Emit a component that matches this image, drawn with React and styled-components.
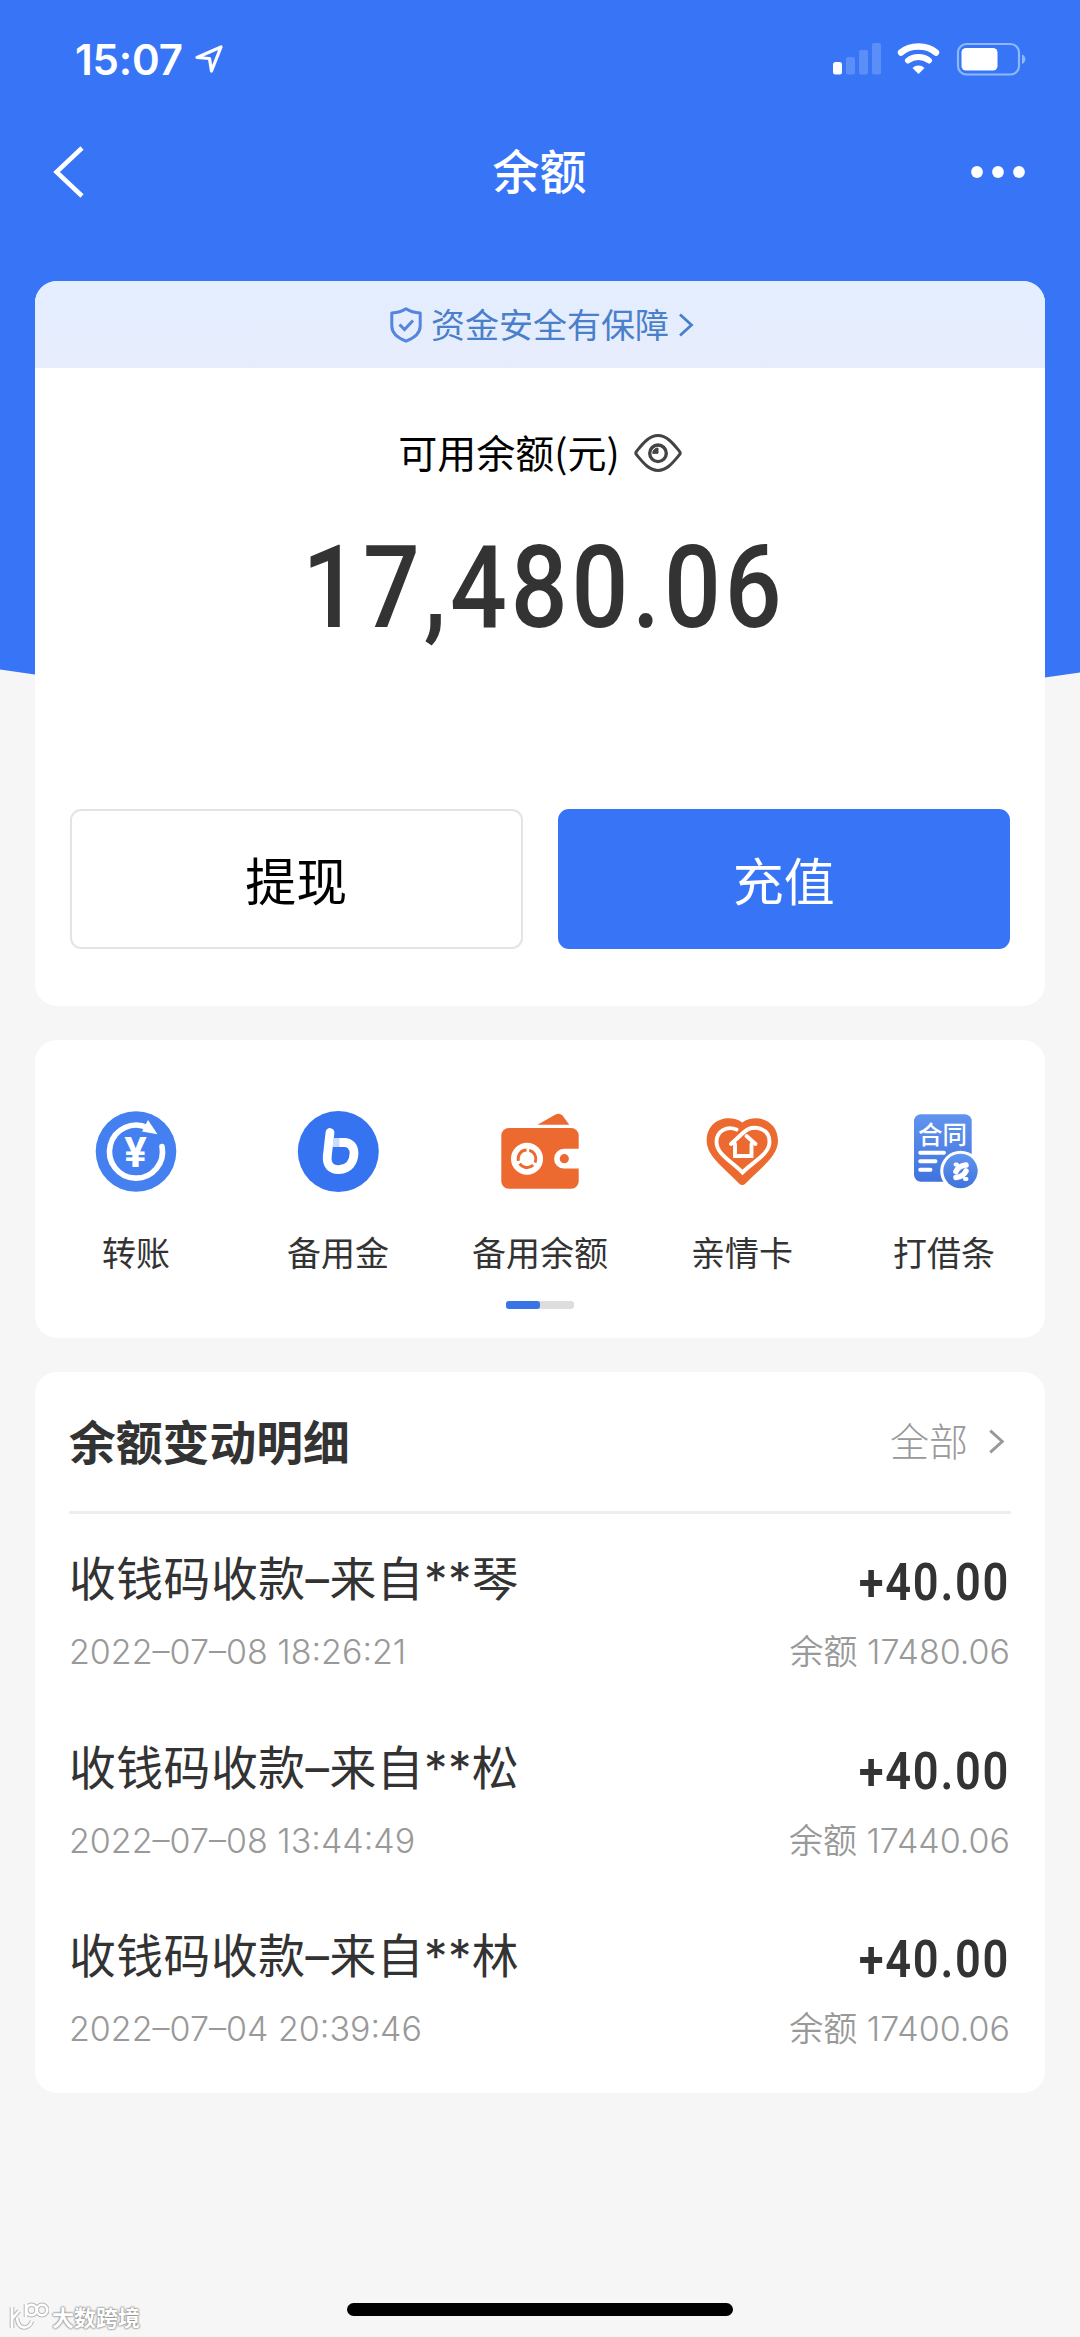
import styled, { createGlobalStyle, css } from "styled-components";

const colors = {
  blue: "#3875f6",
  linkBlue: "#4a7fc9",
  orange: "#ec6a30",
  text: "#333333",
  gray: "#999999",
  line: "#eeeeee",
  page: "#f6f6f6",
};

const quickLinks = [
  { label: "转账", Icon: TransferIcon },
  { label: "备用金", Icon: ReserveIcon },
  { label: "备用余额", Icon: WalletIcon },
  { label: "亲情卡", Icon: FamilyIcon },
  { label: "打借条", Icon: ContractIcon },
];

const records = [
  {
    title: "收钱码收款–来自**琴",
    time: "2022–07–08 18:26:21",
    amount: "+40.00",
    balance: "17480.06",
  },
  {
    title: "收钱码收款–来自**松",
    time: "2022–07–08 13:44:49",
    amount: "+40.00",
    balance: "17440.06",
  },
  {
    title: "收钱码收款–来自**林",
    time: "2022–07–04 20:39:46",
    amount: "+40.00",
    balance: "17400.06",
  },
];

const App = () => {
  return (
    <>
      <GlobalStyle />
      <Screen>
        <HeaderBackground />
        <StatusBar>
          <Time>15:07</Time>
          <LocationIcon />
          <StatusIcons />
        </StatusBar>
        <NavBar>
          <BackIcon />
          <NavTitle>余额</NavTitle>
          <MoreIcon />
        </NavBar>

        <Main>
          <Card>
            <SafetyBanner>
              <ShieldIcon />
              <SafetyText>资金安全有保障</SafetyText>
              <Chevron width={16} height={24} stroke={colors.linkBlue} />
            </SafetyBanner>
            <BalanceLabel>
              <BalanceLabelText>可用余额(元)</BalanceLabelText>
              <EyeIcon />
            </BalanceLabel>
            <Balance>17,480.06</Balance>
            <Actions>
              <ActionButton>提现</ActionButton>
              <ActionButton $primary>充值</ActionButton>
            </Actions>
          </Card>

          <Card>
            <QuickLinks>
              {quickLinks.map(({ label, Icon }) => (
                <QuickLink key={label}>
                  <Icon />
                  <span>{label}</span>
                </QuickLink>
              ))}
            </QuickLinks>
            <Pager>
              <PagerThumb />
            </Pager>
          </Card>

          <Card>
            <RecordHeader>
              <RecordHeading>余额变动明细</RecordHeading>
              <AllLink>
                <AllText>全部</AllText>
                <Chevron width={17} height={25} stroke={colors.gray} />
              </AllLink>
            </RecordHeader>
            <RecordList>
              {records.map((record) => (
                <Record key={record.time}>
                  <RecordLine>
                    <RecordTitle>{record.title}</RecordTitle>
                    <RecordAmount>{record.amount}</RecordAmount>
                  </RecordLine>
                  <RecordMeta>
                    <span>{record.time}</span>
                    <span>余额 {record.balance}</span>
                  </RecordMeta>
                </Record>
              ))}
            </RecordList>
          </Card>
        </Main>

        <Footer>
          <Watermark>
            <WatermarkLogo />
            <span>大数跨境</span>
          </Watermark>
          <HomeIndicator />
        </Footer>
      </Screen>
    </>
  );
};

export default App;

function LocationIcon() {
  return (
    <svg width="30" height="30" viewBox="0 0 30 30" fill="none">
      <path
        d="M3 13.5 27 3 17.5 27 15.5 14.5Z"
        stroke="#fff"
        strokeWidth="3.2"
        strokeLinejoin="round"
      />
    </svg>
  );
}

function StatusIcons() {
  return (
    <StatusSvg width="194" height="34" viewBox="0 0 194 34" fill="none">
      <rect x="1" y="20" width="9" height="12.5" rx="2.5" fill="#fff" />
      <g fill="#fff" opacity="0.18">
        <rect x="14" y="15" width="9" height="17.5" rx="2" />
        <rect x="27" y="8" width="9" height="24.5" rx="2" />
        <rect x="40" y="1" width="9" height="31.5" rx="2" />
      </g>
      <path
        d="M69 10.5C78 2.5 95 2.5 104 10.5"
        stroke="#fff"
        strokeWidth="6.4"
        strokeLinecap="round"
      />
      <path
        d="M76 18.5C82 13.8 91 13.8 97 18.5"
        stroke="#fff"
        strokeWidth="6"
        strokeLinecap="round"
      />
      <path
        d="M80.5 26C84 22.7 89 22.7 92.5 26L86.5 32Z"
        fill="#fff"
      />
      <rect
        x="126"
        y="2"
        width="61"
        height="30.5"
        rx="8.5"
        stroke="#8db9fb"
        strokeWidth="2.2"
      />
      <rect x="129.5" y="6" width="36" height="22.5" rx="4.5" fill="#fff" />
      <path d="M190 12.5C194.5 14 194.5 20.5 190 22Z" fill="#8db9fb" />
    </StatusSvg>
  );
}

function BackIcon() {
  return (
    <svg width="32" height="52" viewBox="0 0 32 52" fill="none">
      <path d="M29 2 3.5 26 29 50" stroke="#fff" strokeWidth="4.5" />
    </svg>
  );
}

function MoreIcon() {
  return (
    <svg width="56" height="14" viewBox="0 0 56 14" fill="#fff">
      <circle cx="7" cy="7" r="5.9" />
      <circle cx="28" cy="7" r="5.9" />
      <circle cx="49" cy="7" r="5.9" />
    </svg>
  );
}

function ShieldIcon() {
  return (
    <svg width="32" height="36" viewBox="0 0 32 36" fill="none">
      <path
        d="M16 1.8C12 4.6 7 5.8 1.8 6V19C1.8 27 9 31.5 16 34.2C23 31.5 30.2 27 30.2 19V6C25 5.8 20 4.6 16 1.8Z"
        stroke="#5585dc"
        strokeWidth="3"
        strokeLinejoin="round"
      />
      <path
        d="M9.5 17.5 14.5 22.5 23 13.5"
        stroke="#5585dc"
        strokeWidth="3"
      />
    </svg>
  );
}

function Chevron({ width, height, stroke }) {
  return (
    <svg width={width} height={height} viewBox="0 0 16 24" fill="none">
      <path d="M2 1.5 13.5 12 2 22.5" stroke={stroke} strokeWidth="2.8" />
    </svg>
  );
}

function EyeIcon() {
  return (
    <svg width="48" height="38" viewBox="0 0 48 38" fill="none">
      <path
        d="M2.6 17.2C9 9.5 15 1.6 24 1.6C33 1.6 39 9.5 45.4 17.2Q47 19 45.4 20.8C39 28.5 33 36.4 24 36.4C15 36.4 9 28.5 2.6 20.8Q1 19 2.6 17.2Z"
        stroke="#444"
        strokeWidth="3"
      />
      <circle cx="24" cy="19.3" r="8.3" stroke="#444" strokeWidth="3.4" />
      <path d="M24 14V19.3H18.7A5.3 5.3 0 0 1 24 14Z" fill="#444" stroke="#444" />
    </svg>
  );
}

function TransferIcon() {
  return (
    <IconSvg viewBox="0 0 84 84">
      <circle cx="42" cy="41.5" r="40.3" fill="#4480ef" />
      <path
        d="M68 36.5A26.5 26.5 0 1 1 54 18"
        fill="none"
        stroke="#fff"
        strokeWidth="5.6"
        strokeLinecap="round"
      />
      <path d="M54 10 63.5 24.3 48 21.5Z" fill="#fff" />
      <YenText x="41.5" y="56.5">
        ¥
      </YenText>
    </IconSvg>
  );
}

function ReserveIcon() {
  return (
    <IconSvg viewBox="0 0 84 84">
      <circle cx="42.3" cy="41.5" r="40.5" fill="#3573f1" />
      <path
        d="M34 22.5 31.3 46C30.5 55 35 60 43 59.6C53 59 57.8 52 58 43.5C58.1 36.5 54 32.5 48 32.5"
        fill="none"
        stroke="#fff"
        strokeWidth="8.8"
        strokeLinecap="round"
        strokeLinejoin="round"
      />
      <path d="M37 32.5H49" stroke="#cbdbfb" strokeWidth="8.8" />
      <path d="M43.5 32.5H49" stroke="#fff" strokeWidth="8.8" />
    </IconSvg>
  );
}

function WalletIcon() {
  return (
    <IconSvg viewBox="0 0 84 84">
      <g fill={colors.orange}>
        <path d="M39.5 14.7 57.5 4.6Q61.5 2.7 64.5 5.5L71.3 14.7Z" />
        <rect x="3.3" y="18" width="77.4" height="60.7" rx="7.5" />
      </g>
      <path d="M81.5 38.8H66A9.9 9.9 0 0 0 66 58.6H81.5Z" fill="#fff" />
      <circle cx="66.3" cy="48.7" r="4.6" fill={colors.orange} />
      <circle cx="29" cy="48.7" r="16" fill="#fff" />
      <circle
        cx="29"
        cy="48.7"
        r="8.8"
        fill="none"
        stroke={colors.orange}
        strokeWidth="3"
        strokeDasharray="15.4 3"
        transform="rotate(-75 29 48.7)"
      />
    </IconSvg>
  );
}

function FamilyIcon() {
  return (
    <IconSvg viewBox="0 0 84 84">
      <path
        d="M42.3 12.5C55 3.5 78 9 78 31C78 47 58 60 45.5 73.5Q42.3 76.5 39 73.5C27 60 6.7 47 6.7 31C6.7 9 29.5 3.5 42.3 12.5Z"
        fill={colors.orange}
      />
      <g fill="none" stroke="#fff" strokeWidth="3.9" strokeLinecap="round">
        <path d="M36.5 19.5C27 15.5 16.5 21 16.5 32C16.5 44 31 51 42.5 62.5C54 51 69.5 44 69.5 32C69.5 18 53 13.5 43.5 22.5L31 34" />
        <path d="M46.5 26 55.5 34M35 34V46H51.5V34" />
      </g>
    </IconSvg>
  );
}

function ContractIcon() {
  return (
    <IconSvg viewBox="0 0 84 84">
      <defs>
        <linearGradient id="contract" x1="0" y1="0" x2="0" y2="1">
          <stop offset="0" stopColor="#6194ee" />
          <stop offset="1" stopColor="#4073dd" />
        </linearGradient>
      </defs>
      <rect
        x="12"
        y="4.3"
        width="57.7"
        height="67.5"
        rx="7"
        fill="url(#contract)"
      />
      <ContractText x="40.5" y="33.5">
        合同
      </ContractText>
      <path
        d="M18.2 42.7H42M18.2 51.3H33.5M18.2 59.8H28.5"
        stroke="#fff"
        strokeWidth="3.9"
        strokeLinecap="round"
      />
      <circle cx="58.5" cy="61" r="20.3" fill="#fff" />
      <circle cx="58.5" cy="61" r="17.2" fill="url(#contract)" />
      <g stroke="#fff" strokeLinecap="round" fill="none">
        <path
          d="M54 61.5C55.5 57.5 60 55.5 64 55M54 67.5C59 67 62.5 64.5 64 61"
          strokeWidth="5.6"
        />
        <path d="M53.5 54.5H55M63 69H64.5" strokeWidth="4" />
      </g>
    </IconSvg>
  );
}

function WatermarkLogo() {
  return (
    <svg width="40" height="28" viewBox="0 0 40 28" fill="none">
      {["#b9b9b9", "#ffffff"].map((stroke, i) => (
        <g key={stroke} stroke={stroke} strokeWidth={i ? 2.6 : 4.6}>
          <path d="M3 5V26M3 17 10 9M8 16C9 28 20 28 23 19" />
          <path d="M17 2V15" />
          <circle cx="22.5" cy="8" r="5.2" />
          <circle cx="33" cy="8" r="5.2" />
        </g>
      ))}
    </svg>
  );
}

const GlobalStyle = createGlobalStyle`
  * {
    box-sizing: border-box;
  }

  body {
    margin: 0;
    background-color: ${colors.page};
    font-family: Inter, "Noto Sans CJK SC", sans-serif;
    color: ${colors.text};
  }

  svg {
    display: block;
    flex-shrink: 0;
  }
`;

const Screen = styled.div`
  position: relative;
  display: flex;
  flex-direction: column;
  width: 1080px;
  height: 2337px;
  overflow: hidden;
  background-color: ${colors.page};
`;

const HeaderBackground = styled.div`
  position: absolute;
  top: 0;
  left: 0;
  width: 1080px;
  height: 760px;
  background-color: ${colors.blue};
  clip-path: path("M0 0H1080V672.5Q540 752 0 669.5Z");
`;

const StatusBar = styled.div`
  position: relative;
  display: flex;
  align-items: center;
  height: 118px;
  padding: 0 54px 0 75px;
`;

const Time = styled.span`
  width: 119px;
  font-size: 42px;
  font-weight: 600;
  letter-spacing: -0.2px;
  color: #fff;
`;

const StatusSvg = styled.svg`
  margin-left: auto;
`;

const NavBar = styled.div`
  position: relative;
  display: flex;
  align-items: center;
  justify-content: space-between;
  height: 109px;
  padding: 0 54px 1px 53px;
`;

const NavTitle = styled.h1`
  margin: 0 0 7px 24px;
  font-size: 47px;
  font-weight: 500;
  color: #fff;
`;

const Main = styled.main`
  position: relative;
  display: flex;
  flex-direction: column;
  gap: 34px;
  padding: 54px 35px 0;
`;

const Card = styled.section`
  overflow: hidden;
  border-radius: 22px;
  background-color: #fff;
`;

const SafetyBanner = styled.div`
  display: flex;
  align-items: center;
  justify-content: center;
  gap: 9px;
  height: 87px;
  padding-left: 4px;
  background: linear-gradient(#e3eeff, #e7ecfc);
  font-size: 34px;
  color: ${colors.linkBlue};
`;

const SafetyText = styled.span`
  margin-bottom: 3px;
`;

const BalanceLabel = styled.div`
  display: flex;
  align-items: center;
  justify-content: center;
  gap: 14px;
  height: 60px;
  margin-top: 55px;
  font-family: "Noto Sans CJK SC", sans-serif;
  font-size: 39px;
  color: #000;
`;

const BalanceLabelText = styled.span`
  margin-bottom: 5px;
`;

const dinText = css`
  font-family: Roboto, "Liberation Sans", sans-serif;
  white-space: nowrap;
`;

const Balance = styled.div`
  ${dinText};
  margin-top: 45px;
  padding-left: 9px;
  font-size: 115px;
  font-weight: 500;
  line-height: 120px;
  letter-spacing: 4.5px;
  text-align: center;
  transform: scaleX(0.87);
`;

const Actions = styled.div`
  display: flex;
  gap: 35px;
  margin-top: 161px;
  padding: 0 35px 57px;
`;

const ActionButton = styled.button`
  flex: 1;
  height: 140px;
  padding: 0;
  border: 2px solid #e4e4e4;
  border-radius: 11px;
  background-color: #fff;
  font-family: "Noto Sans CJK SC", sans-serif;
  font-size: 51px;
  color: #000;

  ${({ $primary }) =>
    $primary &&
    css`
      border-color: ${colors.blue};
      background-color: ${colors.blue};
      color: #fff;
    `}
`;

const QuickLinks = styled.div`
  display: grid;
  grid-template-columns: repeat(5, 1fr);
  padding-top: 70px;
`;

const QuickLink = styled.div`
  display: flex;
  flex-direction: column;
  align-items: center;
  gap: 38px;
  font-size: 34px;
  line-height: 44px;
`;

const IconSvg = styled.svg`
  width: 84px;
  height: 84px;
`;

const YenText = styled.text`
  fill: #fff;
  font-family: Roboto, sans-serif;
  font-size: 42px;
  font-weight: 700;
  text-anchor: middle;
`;

const ContractText = styled.text`
  fill: #fff;
  font-family: "Noto Sans CJK SC", sans-serif;
  font-size: 24.5px;
  font-weight: 500;
  text-anchor: middle;
`;

const Pager = styled.div`
  width: 68px;
  height: 8px;
  margin: 25px auto 29px;
  border-radius: 3px;
  background-color: #dddddd;
`;

const PagerThumb = styled.div`
  width: 34px;
  height: 8px;
  border-radius: 3px;
  background-color: #3874e6;
`;

const RecordHeader = styled.div`
  display: flex;
  align-items: center;
  justify-content: space-between;
  height: 142px;
  margin: 0 34px;
  border-bottom: 3px solid ${colors.line};
`;

const RecordHeading = styled.h2`
  margin: 0 0 5px;
  font-size: 46.8px;
  font-weight: 700;
`;

const AllLink = styled.div`
  display: flex;
  align-items: center;
  gap: 20px;
  padding-right: 6px;
  font-size: 39px;
  font-weight: 300;
  color: ${colors.gray};
`;

const AllText = styled.span`
  margin-bottom: 6px;
`;

const RecordList = styled.div`
  padding: 0 35px 13.5px;
`;

const Record = styled.div`
  display: flex;
  flex-direction: column;
  gap: 21px;
  height: 188.5px;
  padding-top: 35px;
`;

const RecordLine = styled.div`
  display: flex;
  justify-content: space-between;
  line-height: 60px;
`;

const RecordTitle = styled.span`
  margin-left: -1px;
  font-size: 46.8px;
  letter-spacing: 0.5px;
`;

const RecordAmount = styled.span`
  ${dinText};
  position: relative;
  top: 4px;
  font-size: 52px;
  font-weight: 600;
  letter-spacing: 2px;
  transform: scaleX(0.87);
  transform-origin: right;
`;

const RecordMeta = styled.div`
  display: flex;
  justify-content: space-between;
  margin-left: -1px;
  font-size: 34px;
  font-weight: 350;
  line-height: 44px;
  color: ${colors.gray};
`;

const Footer = styled.footer`
  position: relative;
  display: flex;
  justify-content: center;
  margin-top: auto;
  padding-bottom: 21px;
`;

const HomeIndicator = styled.div`
  width: 386px;
  height: 13px;
  border-radius: 7px;
  background-color: #000;
`;

const Watermark = styled.div`
  position: absolute;
  bottom: 7px;
  left: 9px;
  display: flex;
  align-items: flex-end;
  gap: 3px;
  font-size: 22px;
  font-weight: 700;
  line-height: 24px;
  color: #fff;
  text-shadow:
    0 0 2px #888,
    0 0 2px #888,
    0 0 2px #aaa;
`;
